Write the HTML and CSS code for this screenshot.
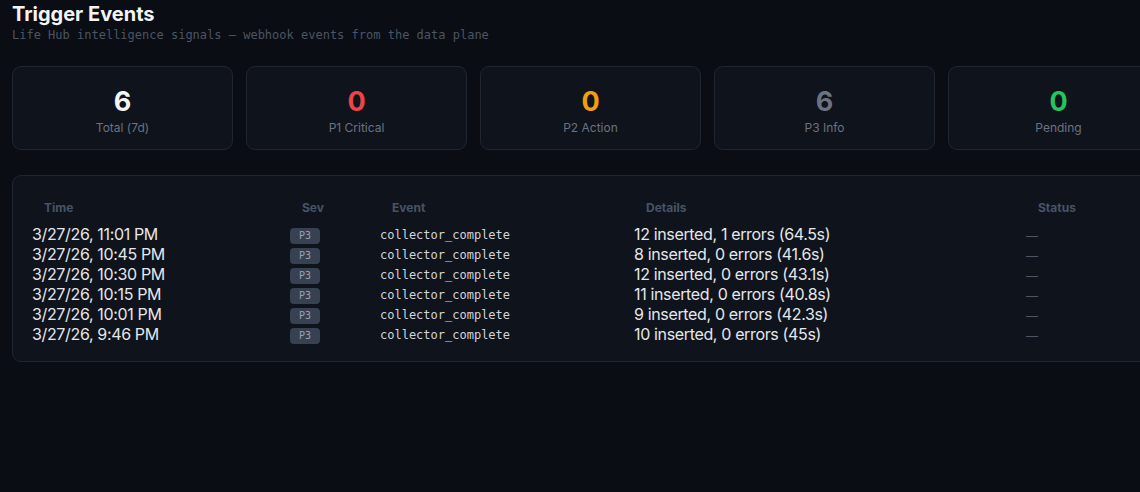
FILE: index.html
```html
<!DOCTYPE html>
<html lang="en">
<head>
    <meta charset="UTF-8">
    <meta name="viewport" content="width=device-width, initial-scale=1.0">
    <title>Trigger Events</title>
    <link rel="stylesheet" href="styles.css">
</head>
<body>
    <div class="page">
        <header>
            <h1>Trigger Events</h1>
            <p class="subtitle">Life Hub intelligence signals — webhook events from the data plane</p>
        </header>

        <div class="stats">
            <div class="stat">
                <div class="stat-value total">6</div>
                <div class="stat-label">Total (7d)</div>
            </div>
            <div class="stat">
                <div class="stat-value p1">0</div>
                <div class="stat-label">P1 Critical</div>
            </div>
            <div class="stat">
                <div class="stat-value p2">0</div>
                <div class="stat-label">P2 Action</div>
            </div>
            <div class="stat">
                <div class="stat-value p3">6</div>
                <div class="stat-label">P3 Info</div>
            </div>
            <div class="stat">
                <div class="stat-value pending">0</div>
                <div class="stat-label">Pending</div>
            </div>
        </div>

        <div class="events">
            <table>
                <thead>
                    <tr>
                        <th class="col-time">Time</th>
                        <th class="col-sev">Sev</th>
                        <th class="col-event">Event</th>
                        <th class="col-details">Details</th>
                        <th class="col-status">Status</th>
                    </tr>
                </thead>
                <tbody>
                    <tr>
                        <td>3/27/26, 11:01 PM</td>
                        <td><span class="badge">P3</span></td>
                        <td class="event-name">collector_complete</td>
                        <td>12 inserted, 1 errors (64.5s)</td>
                        <td class="status">—</td>
                    </tr>
                    <tr>
                        <td>3/27/26, 10:45 PM</td>
                        <td><span class="badge">P3</span></td>
                        <td class="event-name">collector_complete</td>
                        <td>8 inserted, 0 errors (41.6s)</td>
                        <td class="status">—</td>
                    </tr>
                    <tr>
                        <td>3/27/26, 10:30 PM</td>
                        <td><span class="badge">P3</span></td>
                        <td class="event-name">collector_complete</td>
                        <td>12 inserted, 0 errors (43.1s)</td>
                        <td class="status">—</td>
                    </tr>
                    <tr>
                        <td>3/27/26, 10:15 PM</td>
                        <td><span class="badge">P3</span></td>
                        <td class="event-name">collector_complete</td>
                        <td>11 inserted, 0 errors (40.8s)</td>
                        <td class="status">—</td>
                    </tr>
                    <tr>
                        <td>3/27/26, 10:01 PM</td>
                        <td><span class="badge">P3</span></td>
                        <td class="event-name">collector_complete</td>
                        <td>9 inserted, 0 errors (42.3s)</td>
                        <td class="status">—</td>
                    </tr>
                    <tr>
                        <td>3/27/26, 9:46 PM</td>
                        <td><span class="badge">P3</span></td>
                        <td class="event-name">collector_complete</td>
                        <td>10 inserted, 0 errors (45s)</td>
                        <td class="status">—</td>
                    </tr>
                </tbody>
            </table>
        </div>
    </div>
</body>
</html>
```

FILE: styles.css
```css
html, body {
    margin: 0;
    overflow: hidden;
}
body {
    font-family: Inter, "Noto Sans", sans-serif;
    background-color: #0a0d14;
    color: #e5e7eb;
}
.page {
    width: 1157px;
    padding: 0 12px;
}
header h1 {
    margin: 0;
    font-size: 20px;
    line-height: 28px;
    font-weight: 700;
    color: #f3f4f6;
}
.subtitle {
    margin: 0;
    font-family: "DejaVu Sans Mono", monospace;
    font-size: 12px;
    line-height: 14px;
    color: #4b5563;
}
.stats {
    display: grid;
    grid-template-columns: repeat(5, 221px);
    gap: 13px;
    margin-top: 24px;
}
.stat {
    background-color: #0f131b;
    border: 1px solid #1f2631;
    border-radius: 9px;
    height: 82px;
    display: flex;
    flex-direction: column;
    align-items: center;
    justify-content: center;
}
.stat-value {
    font-size: 27px;
    line-height: 30px;
    font-weight: 700;
    margin-top: 6px;
}
.stat-label {
    font-size: 12px;
    line-height: 16px;
    color: #6b7280;
    margin-top: 3px;
}
.total { color: #f3f4f6; }
.p1 { color: #ef4444; }
.p2 { color: #f59e0b; }
.p3 { color: #6b7280; }
.pending { color: #22c55e; }
.events {
    margin-top: 25px;
    background-color: #0f131b;
    border: 1px solid #1f2631;
    border-radius: 9px;
    padding: 16px 20px 17px 19px;
}
table {
    border-collapse: collapse;
    table-layout: fixed;
    width: 100%;
}
th {
    box-sizing: border-box;
    text-align: left;
    font-size: 12px;
    line-height: 16px;
    font-weight: 700;
    color: #475467;
    padding: 8px 12px;
}
td {
    padding: 0;
    font-size: 16px;
    line-height: 20px;
    letter-spacing: -0.35px;
    color: #e5e7eb;
    vertical-align: middle;
}
.col-time { width: 258px; }
.col-sev { width: 90px; }
.col-event { width: 254px; }
.col-details { width: 392px; }
.badge {
    display: inline-block;
    background-color: #374151;
    color: #9ca3af;
    font-family: "DejaVu Sans Mono", monospace;
    font-size: 10px;
    line-height: 14px;
    letter-spacing: 0;
    padding: 1px 9px;
    border-radius: 4px;
    vertical-align: middle;
}
.event-name {
    font-family: "DejaVu Sans Mono", monospace;
    font-size: 12px;
    line-height: 17px;
    padding-top: 3px;
    letter-spacing: 0;
    color: #d1d5db;
}
.status {
    font-size: 12px;
    line-height: 17px;
    padding-top: 3px;
    color: #4b5563;
}
```
